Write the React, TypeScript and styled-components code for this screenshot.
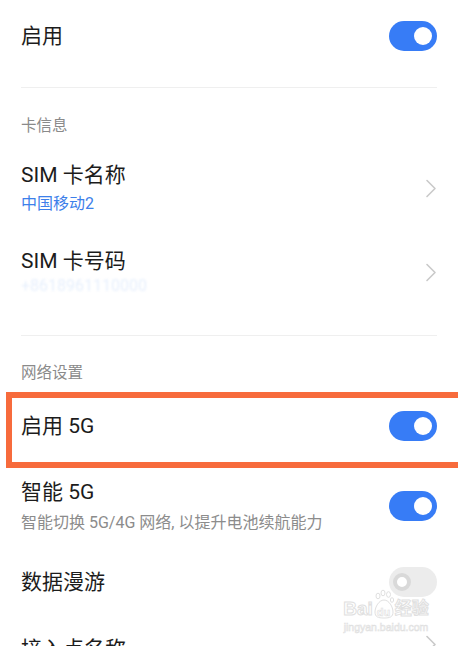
import React from "react";
import styled, { createGlobalStyle } from "styled-components";

const Global = createGlobalStyle`
  html, body { margin: 0; padding: 0; background: #ffffff; }
  body { font-family: Roboto, "Noto Sans CJK SC", sans-serif; overflow: hidden; }
`;

const Page = styled.div`
  position: relative;
  width: 458px;
  height: 646px;
  overflow: hidden;
  background: #ffffff;
  padding: 0 21px;
  box-sizing: border-box;
`;

const Row = styled.div<{ $h: number }>`
  display: flex;
  align-items: center;
  justify-content: space-between;
  height: ${(p) => p.$h}px;
`;

const TextCol = styled.div<{ $gap?: number }>`
  display: flex;
  flex-direction: column;
  gap: ${(p) => p.$gap ?? 2}px;
`;

const Title = styled.div`
  font-size: 21px;
  line-height: 28px;
  color: #1c1c1c;
  white-space: nowrap;
`;

const Sub = styled.div<{ $tone?: "blue" | "gray" | "blur" }>`
  font-size: 16px;
  line-height: 22px;
  white-space: nowrap;
  color: ${(p) =>
    p.$tone === "blue" ? "#3d80ea" : p.$tone === "blur" ? "rgba(61,128,234,0.13)" : "#8c8c8c"};
  filter: ${(p) => (p.$tone === "blur" ? "blur(1.2px)" : "none")};
`;

const Divider = styled.div<{ $top: number }>`
  height: 1px;
  background: #efefef;
  margin-top: ${(p) => p.$top}px;
`;

const Header = styled.div<{ $top: number; $bottom: number }>`
  font-size: 15.5px;
  line-height: 22px;
  color: #8a8a8a;
  padding-top: ${(p) => p.$top}px;
  padding-bottom: ${(p) => p.$bottom}px;
`;

const Toggle = styled.div<{ $on?: boolean }>`
  position: relative;
  flex: none;
  width: 48px;
  height: 30px;
  border-radius: 15px;
  background: ${(p) => (p.$on ? "#377cf6" : "#ececec")};
  &::after {
    content: "";
    position: absolute;
    top: ${(p) => (p.$on ? 6 : 5.5)}px;
    ${(p) => (p.$on ? "right: 5px;" : "left: 4px;")}
    width: ${(p) => (p.$on ? 18 : 10)}px;
    height: ${(p) => (p.$on ? 18 : 10)}px;
    border-radius: 50%;
    background: #ffffff;
    ${(p) => (p.$on ? "" : "border: 4.5px solid #d9d9d9;")}
  }
`;

const Highlight = styled.div`
  margin: 0 -27px 0 -15px;
  height: 76px;
  box-sizing: border-box;
  border: 6px solid #f76b3c;
  padding: 13px 21px 21px 9px;
  display: flex;
  align-items: center;
  justify-content: space-between;
`;

const Tail = styled.div`
  padding-top: 15px;
  display: flex;
  justify-content: space-between;
`;

const Watermark = styled.div`
  position: absolute;
  left: 340px;
  top: 589px;
  width: 92px;
  display: flex;
  flex-direction: column;
  align-items: center;
  pointer-events: none;
`;

const MarkLine = styled.div`
  display: flex;
  align-items: flex-end;
  gap: 1px;
  white-space: nowrap;
  font-family: "Liberation Sans", "Noto Sans CJK SC", sans-serif;
  font-weight: 700;
  font-size: 19px;
  line-height: 20px;
  color: #ffffff;
  -webkit-text-stroke: 1px #e0e0e0;
`;

const MarkWord = styled.span<{ $size?: number }>`
  flex: none;
  font-size: ${(p) => p.$size ?? 19}px;
`;

const MarkSmall = styled.div`
  font-family: "Liberation Sans", sans-serif;
  font-size: 10.5px;
  line-height: 12px;
  color: #ffffff;
  white-space: nowrap;
  -webkit-text-stroke: 0.6px #e0e0e0;
  margin-top: 2px;
`;

const DuWrap = styled.div`
  position: relative;
  flex: none;
  width: 20px;
  height: 30px;
`;

const DuText = styled.span`
  position: absolute;
  bottom: 1px;
  left: 3px;
  font-size: 11px;
  line-height: 11px;
  -webkit-text-stroke: 0.6px #e0e0e0;
`;

const Chevron = () => (
  <svg width="12" height="19" viewBox="0 0 12 19" fill="none">
    <path d="M2 1.5 L10 9.5 L2 17.5" stroke="#c9c9c9" strokeWidth="1.6" strokeLinecap="round" strokeLinejoin="round" />
  </svg>
);

const Paw = () => (
  <svg width="20" height="30" viewBox="0 0 20 30" fill="#fff" stroke="#e0e0e0" strokeWidth="1">
    <ellipse cx="4" cy="7" rx="2" ry="2.8" />
    <ellipse cx="9" cy="4" rx="2" ry="2.8" />
    <ellipse cx="14.5" cy="5.5" rx="2" ry="2.8" />
    <ellipse cx="18" cy="11" rx="1.6" ry="2.3" />
    <path d="M10 11 C5 11 1 18 1 23 C1 28 4 29 10 29 C16 29 19 28 19 23 C19 18 15 11 10 11 Z" />
  </svg>
);

export default function App() {
  return (
    <>
      <Global />
      <Page>
        <Row $h={72}>
          <Title>启用</Title>
          <Toggle $on />
        </Row>
        <Divider $top={15} />
        <Header $top={27} $bottom={9}>卡信息</Header>
        <Row $h={84}>
          <TextCol $gap={4}>
            <Title>SIM 卡名称</Title>
            <Sub $tone="blue">中国移动2</Sub>
          </TextCol>
          <Chevron />
        </Row>
        <Row $h={84}>
          <TextCol $gap={0}>
            <Title>SIM 卡号码</Title>
            <Sub $tone="blur">+8618961110000</Sub>
          </TextCol>
          <Chevron />
        </Row>
        <Divider $top={21} />
        <Header $top={26} $bottom={8}>网络设置</Header>
        <Highlight>
          <Title>启用 5G</Title>
          <Toggle $on />
        </Highlight>
        <Row $h={76}>
          <TextCol $gap={6}>
            <Title>智能 5G</Title>
            <Sub $tone="gray">智能切换 5G/4G 网络, 以提升电池续航能力</Sub>
          </TextCol>
          <Toggle $on />
        </Row>
        <Row $h={76}>
          <Title>数据漫游</Title>
          <Toggle />
        </Row>
        <Tail>
          <Title>接入点名称</Title>
          <Chevron />
        </Tail>
        <Watermark>
          <MarkLine>
            <MarkWord>Bai</MarkWord>
            <DuWrap>
              <Paw />
              <DuText>du</DuText>
            </DuWrap>
            <MarkWord $size={17}>经验</MarkWord>
          </MarkLine>
          <MarkSmall>jingyan.baidu.com</MarkSmall>
        </Watermark>
      </Page>
    </>
  );
}
